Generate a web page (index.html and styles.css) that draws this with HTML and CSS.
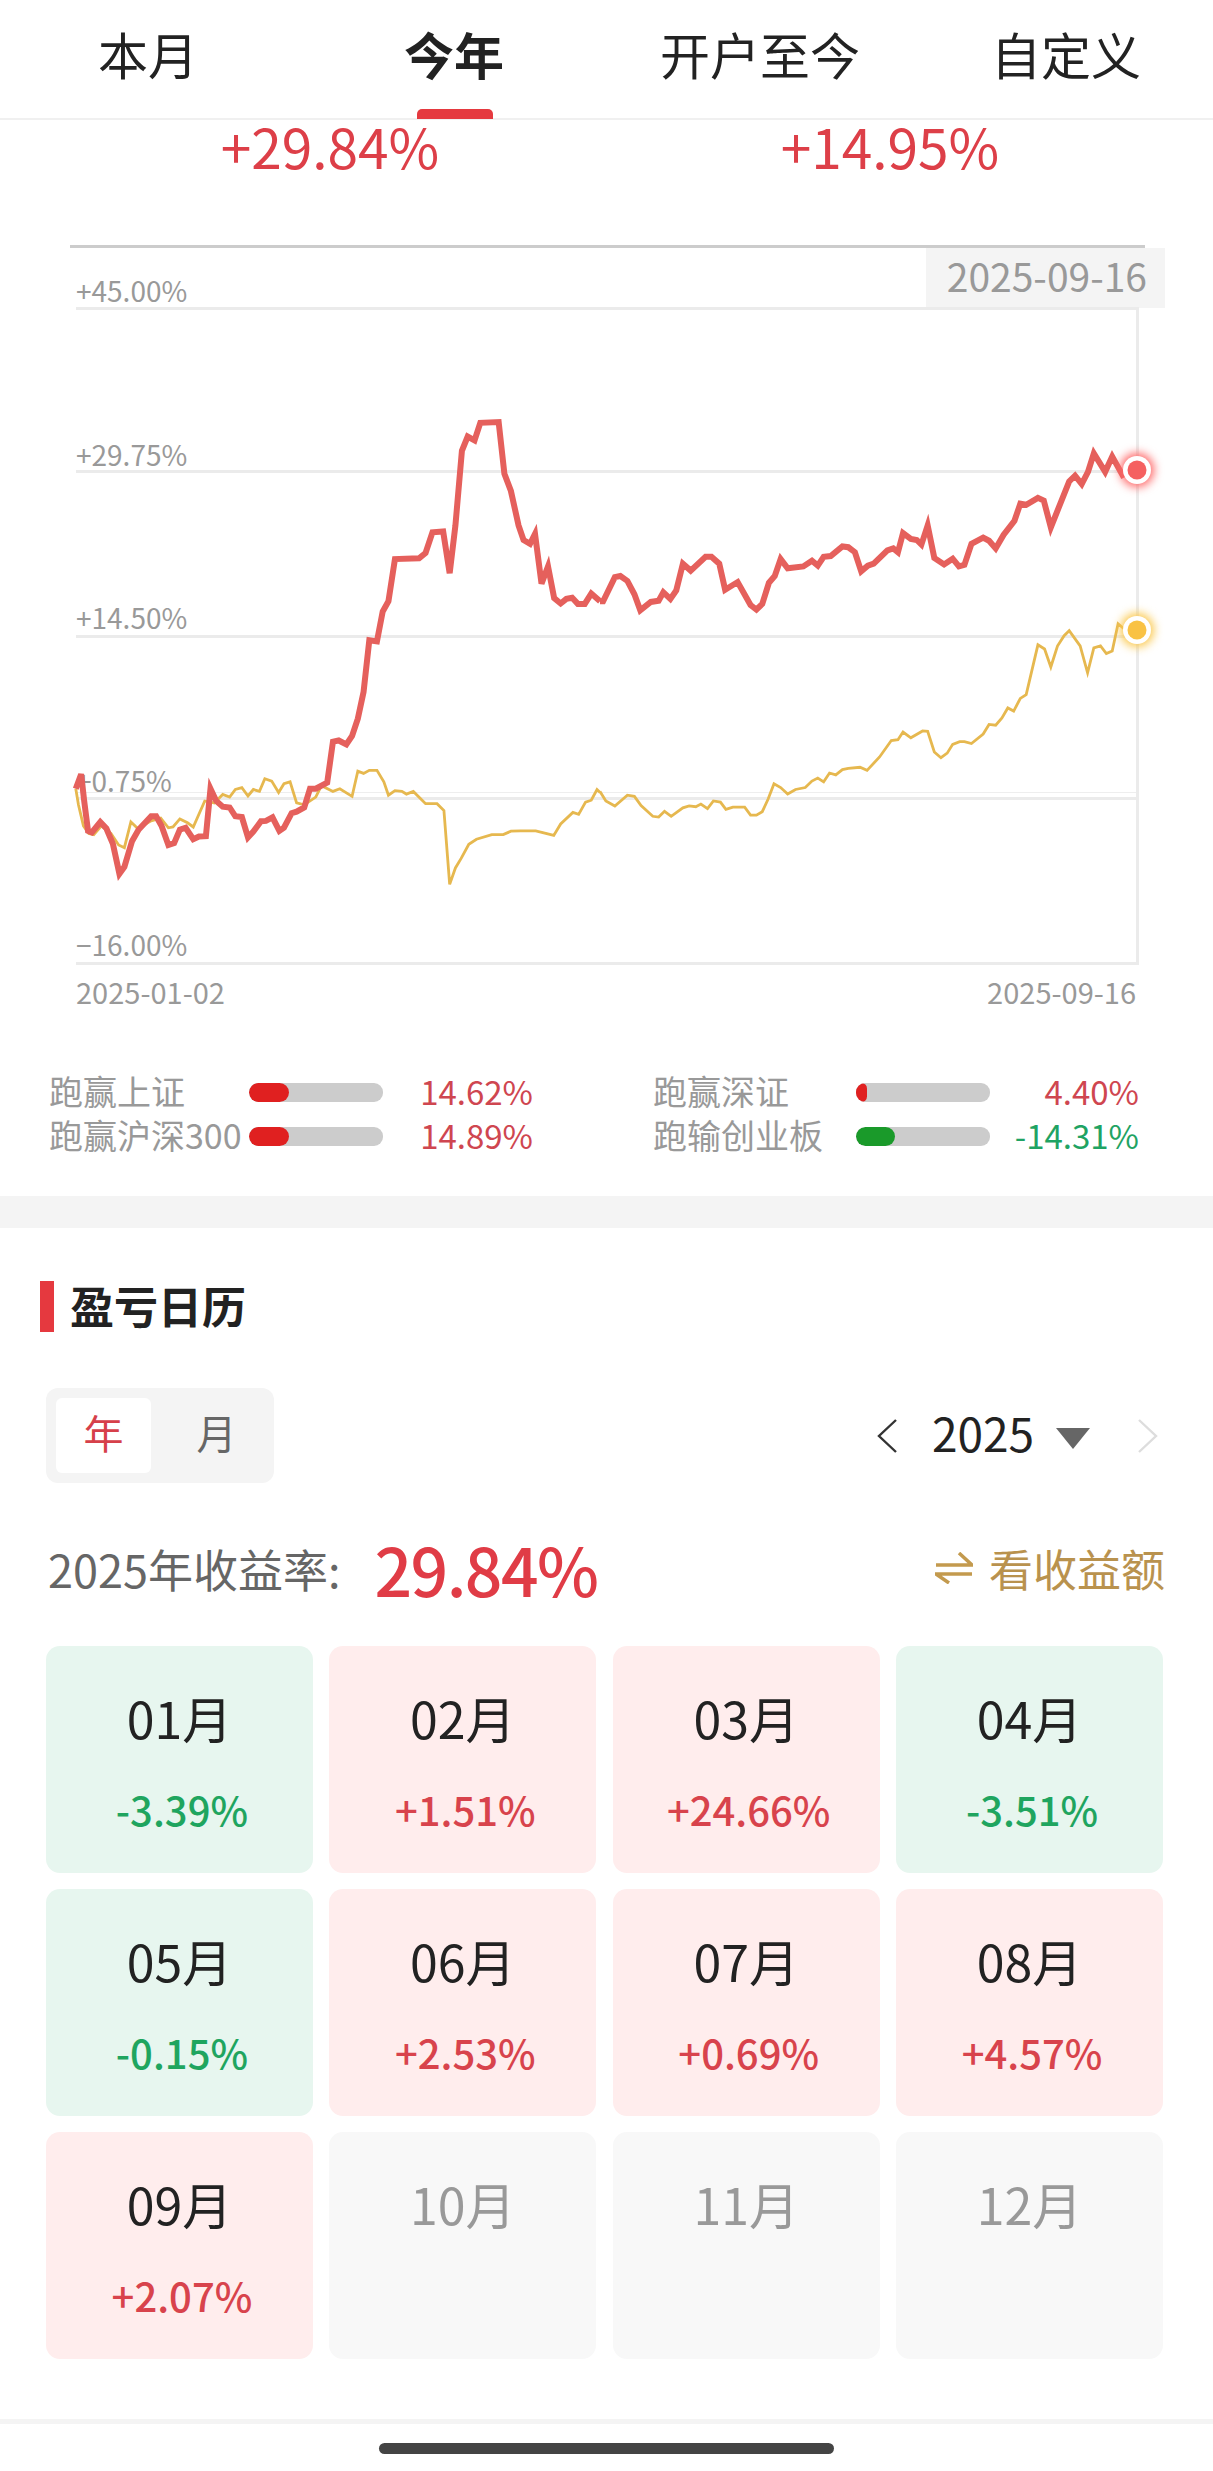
FILE: index.html
```html
<!DOCTYPE html>
<html lang="zh-CN">
<head>
    <meta charset="UTF-8">
    <meta name="viewport" content="width=device-width, initial-scale=1.0">
    <title>收益走势</title>
    <link rel="stylesheet" href="styles.css">
</head>
<body>
    <div id="page">
        <header class="tabs">
            <div class="tab">本月</div>
            <div class="tab active">今年</div>
            <div class="tab">开户至今</div>
            <div class="tab">自定义</div>
        </header>
        <section class="totals">
            <div class="total">+29.84%</div>
            <div class="total">+14.95%</div>
        </section>
        <svg class="chart" width="1213" height="800" viewBox="0 240 1213 800">
            <rect class="line-top" x="70" y="245" width="1075" height="3"/>
            <rect class="date-bg" x="926" y="248" width="239" height="60"/>
            <text class="date-tag" x="1147" y="292" text-anchor="end">2025-09-16</text>
            <rect class="grid" x="76" y="307" width="1062" height="3"/>
            <rect class="grid" x="76" y="470" width="1062" height="3"/>
            <rect class="grid" x="76" y="635" width="1062" height="3"/>
            <rect class="grid-thin" x="76" y="792" width="1062" height="1"/>
            <rect class="grid" x="76" y="797" width="1062" height="3"/>
            <rect class="grid" x="76" y="962" width="1062" height="3"/>
            <rect class="grid" x="1136" y="307" width="3" height="658"/>
            <text class="axis" x="76" y="302">+45.00%</text>
            <text class="axis" x="76" y="466">+29.75%</text>
            <text class="axis" x="76" y="629">+14.50%</text>
            <text class="axis" x="76" y="792">+0.75%</text>
            <text class="axis" x="76" y="956">−16.00%</text>
            <text class="axis date" x="76" y="1004">2025-01-02</text>
            <text class="axis date" x="1136" y="1004" text-anchor="end">2025-09-16</text>
            <g transform="translate(0 380) scale(0.3827)">
                <polyline class="series yellow" points="198,1068 205,1110 218,1165 232,1185 245,1188 265,1165 290,1185 310,1215 325,1222 342,1155 360,1172 395,1152 420,1145 440,1170 452,1168 470,1147 490,1157 505,1168 535,1100 560,1105 582,1083 600,1090 615,1070 632,1065 648,1087 662,1070 678,1075 692,1042 710,1048 728,1078 742,1055 758,1050 775,1105 795,1110 825,1090 840,1060 870,1075 888,1068 920,1088 935,1022 950,1028 965,1020 985,1020 1003,1050 1015,1085 1032,1073 1050,1075 1062,1082 1080,1075 1112,1107 1142,1107 1160,1125 1175,1318 1190,1275 1205,1250 1225,1213 1245,1200 1285,1188 1315,1188 1335,1179 1360,1178 1400,1178 1447,1190 1465,1160 1497,1130 1512,1135 1530,1103 1545,1098 1560,1070 1568,1078"/>
            </g>
            <g transform="translate(600 380) scale(0.391 0.3827)">
                <polyline class="series yellow" points="0,1075 15,1100 38,1113 70,1085 88,1088 105,1112 135,1140 150,1142 165,1127 182,1140 212,1118 228,1113 245,1115 258,1108 275,1120 290,1100 308,1103 322,1122 340,1116 370,1116 385,1137 400,1137 415,1128 430,1095 445,1055 462,1065 480,1082 500,1070 525,1065 542,1048 557,1040 572,1050 587,1027 603,1032 620,1018 635,1015 665,1012 683,1020 715,985 745,942 762,940 775,920 795,935 825,917 838,918 855,972 872,987 888,975 902,952 920,945 932,945 950,950 980,925 995,900 1012,902 1028,883 1043,857 1058,865 1075,832 1090,822 1120,692 1137,703 1153,750 1170,695 1187,668 1200,655 1228,695 1247,765 1263,700 1280,695 1295,715 1310,708 1325,637 1340,650"/>
            </g>
            <g transform="translate(0 380) scale(0.3827)">
                <polyline class="series red" points="198,1068 212,1030 220,1100 230,1178 240,1182 262,1155 278,1172 295,1212 312,1290 325,1272 345,1205 362,1175 395,1140 408,1140 422,1165 440,1215 455,1210 470,1175 485,1170 505,1200 520,1193 538,1192 550,1068 565,1100 582,1115 600,1117 615,1140 632,1142 648,1195 662,1180 682,1153 695,1152 712,1143 730,1178 742,1170 762,1132 775,1128 795,1117 810,1068 825,1068 855,1052 870,945 885,942 905,952 920,930 935,885 950,815 965,680 985,683 1000,605 1015,578 1032,468 1095,466 1112,452 1130,398 1158,396 1175,505 1190,380 1207,185 1222,148 1240,158 1255,112 1303,110 1318,245 1335,290 1355,380 1368,418 1385,428 1398,402 1415,532 1432,487 1448,570 1465,584 1480,572 1495,569 1510,585 1528,585 1545,558 1568,578"/>
            </g>
            <g transform="translate(600 380) scale(0.391 0.3827)">
                <polyline class="series red" points="0,578 8,578 38,515 52,512 70,525 88,560 103,602 130,580 150,577 162,555 180,572 195,550 212,480 232,498 270,462 285,462 305,480 320,548 352,528 385,588 400,600 415,585 432,530 447,512 462,468 480,492 520,487 542,472 557,485 572,462 590,460 620,435 635,437 652,450 668,500 685,485 700,480 735,445 750,440 762,450 775,400 795,415 810,418 822,430 838,380 855,465 880,482 902,467 918,487 932,483 950,428 980,412 995,420 1012,440 1032,405 1060,368 1075,323 1090,326 1120,308 1135,315 1153,385 1200,265 1215,250 1232,272 1248,240 1263,192 1292,240 1310,200 1340,255"/>
            </g>
            <circle class="glow-red" cx="1137" cy="470" r="17"/>
            <circle class="dot-ring" cx="1137" cy="470" r="14"/>
            <circle class="dot-red" cx="1137" cy="470" r="9.5"/>
            <circle class="glow-yellow" cx="1137" cy="630" r="17"/>
            <circle class="dot-ring" cx="1137" cy="630" r="14"/>
            <circle class="dot-yellow" cx="1137" cy="630" r="9.5"/>
        </svg>
        <section class="compare">
            <div class="cmp">
                <span class="cmp-name">跑赢上证</span>
                <span class="track"><span class="fill up" style="width: 40px"></span></span>
                <span class="cmp-val">14.62%</span>
            </div>
            <div class="cmp">
                <span class="cmp-name">跑赢深证</span>
                <span class="track"><span class="fill up" style="width: 11px"></span></span>
                <span class="cmp-val">4.40%</span>
            </div>
            <div class="cmp">
                <span class="cmp-name">跑赢沪深300</span>
                <span class="track"><span class="fill up" style="width: 40px"></span></span>
                <span class="cmp-val">14.89%</span>
            </div>
            <div class="cmp">
                <span class="cmp-name">跑输创业板</span>
                <span class="track"><span class="fill down" style="width: 39px"></span></span>
                <span class="cmp-val neg">-14.31%</span>
            </div>
        </section>
        <div class="band"></div>
        <section class="calendar">
            <h2 class="cal-title">盈亏日历</h2>
            <div class="cal-controls">
                <div class="seg">
                    <div class="seg-item active">年</div>
                    <div class="seg-item">月</div>
                </div>
                <div class="year-picker">
                    <svg class="chev" width="20" height="34" viewBox="0 0 20 34"><path d="M19 1 L2 17 L19 33"/></svg>
                    <span class="year">2025</span>
                    <span class="caret"></span>
                    <svg class="chev off" width="20" height="34" viewBox="0 0 20 34"><path d="M1 1 L18 17 L1 33"/></svg>
                </div>
            </div>
            <div class="rate-row">
                <div class="rate">
                    <span class="rate-label">2025年收益率:</span>
                    <span class="rate-val">29.84%</span>
                </div>
                <div class="switch">
                    <svg class="swap" width="38" height="32" viewBox="0 0 38 32"><path d="M1 13 H37 L24 1"/><path d="M37 22 H1 L14 31"/></svg>
                    <span>看收益额</span>
                </div>
            </div>
            <div class="months">
                <div class="month loss"><div class="m-name">01月</div><div class="m-val">-3.39%</div></div>
                <div class="month gain"><div class="m-name">02月</div><div class="m-val">+1.51%</div></div>
                <div class="month gain"><div class="m-name">03月</div><div class="m-val">+24.66%</div></div>
                <div class="month loss"><div class="m-name">04月</div><div class="m-val">-3.51%</div></div>
                <div class="month loss"><div class="m-name">05月</div><div class="m-val">-0.15%</div></div>
                <div class="month gain"><div class="m-name">06月</div><div class="m-val">+2.53%</div></div>
                <div class="month gain"><div class="m-name">07月</div><div class="m-val">+0.69%</div></div>
                <div class="month gain"><div class="m-name">08月</div><div class="m-val">+4.57%</div></div>
                <div class="month gain"><div class="m-name">09月</div><div class="m-val">+2.07%</div></div>
                <div class="month none"><div class="m-name">10月</div></div>
                <div class="month none"><div class="m-name">11月</div></div>
                <div class="month none"><div class="m-name">12月</div></div>
            </div>
        </section>
        <div class="foot-line"></div>
        <div class="home-bar"></div>
    </div>
</body>
</html>
```

FILE: styles.css
```css
body {
    margin: 0;
    padding: 0;
    background: white;
    font-family: "Noto Sans CJK SC", "Noto Sans", sans-serif;
    color: #222;
}
#page {
    width: 1213px;
    height: 2471px;
    overflow: hidden;
}
.tabs {
    display: grid;
    grid-template-columns: repeat(4, 306px);
    height: 118px;
    margin-left: -5px;
    width: 1218px;
    border-bottom: 2px solid #f0f0f0;
    position: relative;
}
.tab {
    position: relative;
    text-align: center;
    font-size: 50px;
    line-height: 106px;
}
.tab.active {
    font-weight: 700;
}
.tab.active::after {
    content: "";
    position: absolute;
    left: 116px;
    bottom: -1px;
    width: 76px;
    height: 10px;
    border-radius: 5px 5px 0 0;
    background: #e5393f;
}
.totals {
    display: flex;
    height: 120px;
    padding-left: 50px;
}
.total {
    width: 560px;
    text-align: center;
    font-size: 55px;
    line-height: 56px;
    margin-top: -3px;
    color: #dd3f48;
}
.chart {
    display: block;
}
.line-top {
    fill: #ccc;
}
.date-bg {
    fill: #f4f4f4;
}
.date-tag {
    font-size: 39px;
    fill: #999;
}
.grid {
    fill: #ebebeb;
}
.grid-thin {
    fill: #eee;
}
.axis {
    font-size: 28px;
    fill: #999;
}
.axis.date {
    font-size: 29px;
}
.series {
    fill: none;
    vector-effect: non-scaling-stroke;
}
.series.red {
    stroke: #e5605c;
    stroke-width: 6;
}
.series.yellow {
    stroke: #e6b84f;
    stroke-width: 2.8;
}
.glow-red {
    fill: #f66;
    filter: blur(5px);
}
.glow-yellow {
    fill: #fbc84c;
    filter: blur(5px);
}
.dot-ring {
    fill: white;
}
.dot-red {
    fill: #f56060;
}
.dot-yellow {
    fill: #f9c244;
}
.compare {
    display: grid;
    grid-template-columns: 604px 1fr;
    align-content: start;
    height: 126px;
    padding: 30px 74px 0 49px;
}
.cmp {
    display: flex;
    align-items: center;
    height: 44px;
    font-size: 34px;
    line-height: 40px;
}
.cmp-name {
    width: 200px;
    margin-top: -2px;
    color: #999;
    white-space: nowrap;
}
.cmp:nth-child(even) .cmp-name {
    width: 203px;
}
.track {
    width: 134px;
    height: 19px;
    border-radius: 9px;
    background: #ccc;
    overflow: hidden;
}
.fill {
    display: block;
    height: 100%;
    border-radius: 10px;
}
.fill.up {
    background: #e02020;
}
.fill.down {
    background: #1a9a2a;
}
.cmp-val {
    width: 150px;
    margin-top: -2px;
    text-align: right;
    font-size: 33px;
    color: #cf4650;
}
.cmp:nth-child(even) .cmp-val {
    width: 149px;
}
.cmp-val.neg {
    color: #1fa363;
}
.band {
    height: 32px;
    background: #f4f4f4;
}
.calendar {
    padding: 53px 50px 60px 46px;
}
.cal-title {
    margin: 0 0 56px -6px;
    height: 51px;
    line-height: 48px;
    padding-left: 16px;
    border-left: 14px solid #e5393f;
    font-size: 44px;
    font-weight: 700;
}
.cal-controls {
    display: flex;
    justify-content: space-between;
    align-items: center;
}
.seg {
    display: flex;
    width: 228px;
    height: 95px;
    box-sizing: border-box;
    padding: 10px;
    border-radius: 12px;
    background: #f4f4f4;
}
.seg-item {
    width: 95px;
    height: 75px;
    line-height: 69px;
    text-align: center;
    font-size: 40px;
    color: #666;
    border-radius: 6px;
}
.seg-item.active {
    background: white;
    color: #d6404a;
}
.seg-item + .seg-item {
    margin-left: 18px;
}
.year-picker {
    display: flex;
    align-items: center;
    padding-right: 5px;
}
.chev {
    fill: none;
    stroke: #333;
    stroke-width: 2.4;
}
.chev.off {
    stroke: #ddd;
    margin-left: 48px;
}
.year {
    margin: -8px 0 0 35px;
    font-size: 46px;
    line-height: 60px;
}
.caret {
    margin: 6px 0 0 22px;
    border-left: 17px solid transparent;
    border-right: 17px solid transparent;
    border-top: 21px solid #666;
}
.rate-row {
    display: flex;
    justify-content: space-between;
    align-items: center;
    height: 90px;
    margin: 40px 0 33px;
}
.rate {
    display: flex;
    align-items: center;
}
.rate-label {
    margin-left: 2px;
    font-size: 45px;
    color: #666;
}
.rate-val {
    margin-left: 34px;
    font-size: 66px;
    letter-spacing: -1.5px;
    font-weight: 500;
    color: #e03c46;
}
.switch {
    display: flex;
    align-items: center;
    margin-right: -2px;
    font-size: 44px;
    color: #b9924e;
}
.swap {
    margin-right: 16px;
    fill: none;
    stroke: #c39a4e;
    stroke-width: 3.5;
}
.months {
    display: grid;
    grid-template-columns: repeat(4, 1fr);
    grid-auto-rows: 227px;
    gap: 16px 16.5px;
}
.month {
    border-radius: 14px;
    text-align: center;
}
.month.gain {
    background: #ffeded;
}
.month.loss {
    background: #e7f6ef;
}
.month.none {
    background: #f8f8f8;
}
.m-name {
    padding-top: 41px;
    font-size: 50px;
    line-height: 60px;
}
.m-val {
    margin-top: 38px;
    padding-left: 5px;
    font-size: 40px;
    line-height: 48px;
    font-weight: 500;
}
.gain .m-val {
    color: #d8434c;
}
.loss .m-val {
    color: #1fa55f;
}
.none .m-name {
    color: #999;
}
.foot-line {
    height: 5px;
    background: #f4f4f4;
}
.home-bar {
    width: 455px;
    height: 11px;
    margin: 19px auto 0;
    border-radius: 6px;
    background: #444;
}
```
